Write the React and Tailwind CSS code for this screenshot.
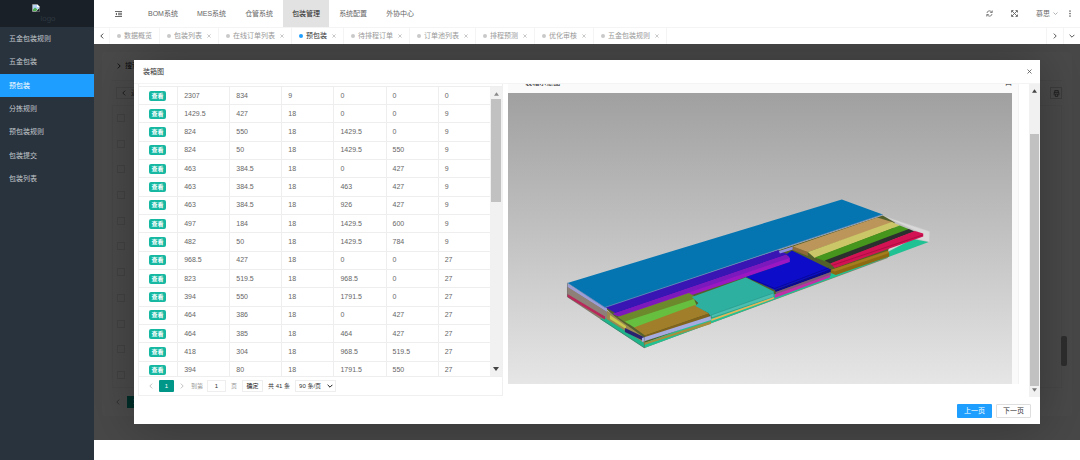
import { useState } from "react"

const menu = ["五金包装规则", "五金包装", "预包装", "分拣规则", "预包装规则", "包装提交", "包装列表"]

const systems = ["BOM系统", "MES系统", "仓管系统", "包装管理", "系统配置", "外协中心"]

const tabs = ["数据概览", "包装列表", "在线订单列表", "预包装", "待排程订单", "订单池列表", "排程预测", "优化审核", "五金包装规则"]

const rows = [
  ["2307", "834", "9", "0", "0", "0"],
  ["1429.5", "427", "18", "0", "0", "9"],
  ["824", "550", "18", "1429.5", "0", "9"],
  ["824", "50", "18", "1429.5", "550", "9"],
  ["463", "384.5", "18", "0", "427", "9"],
  ["463", "384.5", "18", "463", "427", "9"],
  ["463", "384.5", "18", "926", "427", "9"],
  ["497", "184", "18", "1429.5", "600", "9"],
  ["482", "50", "18", "1429.5", "784", "9"],
  ["968.5", "427", "18", "0", "0", "27"],
  ["823", "519.5", "18", "968.5", "0", "27"],
  ["394", "550", "18", "1791.5", "0", "27"],
  ["464", "386", "18", "0", "427", "27"],
  ["464", "385", "18", "464", "427", "27"],
  ["418", "304", "18", "968.5", "519.5", "27"],
  ["394", "80", "18", "1791.5", "550", "27"],
]

function Chevron({ dir, className }) {
  const d = {
    left: "M7 1 3 5l4 4",
    right: "M3 1l4 4-4 4",
    down: "M1 3l4 4 4-4",
  }[dir]
  return (
    <svg viewBox="0 0 10 10" className={className} fill="none" stroke="currentColor" strokeWidth="1.5">
      <path d={d} />
    </svg>
  )
}

function Cross({ className }) {
  return (
    <svg viewBox="0 0 10 10" className={className} fill="none" stroke="currentColor" strokeWidth="1.6">
      <path d="M1 1l8 8M9 1 1 9" />
    </svg>
  )
}

function Arrow({ up, className }) {
  return (
    <svg viewBox="0 0 6 4" className={className} fill="currentColor">
      <path d={up ? "M0 4 3 0l3 4z" : "M0 0h6L3 4z"} />
    </svg>
  )
}

function Sidebar() {
  return (
    <aside className="w-[94px] shrink-0 bg-[#28333e] text-[#c4c8cc]">
      <div className="h-[27px] pr-[6px] bg-[#192027] flex justify-center">
        <svg viewBox="0 0 16 16" className="w-2 h-2 mt-1">
          <path d="M1 1h10l4 4v10H1z" fill="#fff" stroke="#9a9a9a" />
          <path d="M2 2h8v4h4v3L2 13z" fill="#b5d3f5" />
          <path d="M2 14v-3l4-4 5 4-3 3z" fill="#4caf50" />
          <path d="M15 8 8 15h7z" fill="#192027" />
        </svg>
        <span className="mt-[14px] text-[8px] leading-[10px] text-[#2d3741]">logo</span>
      </div>
      <nav className="grid auto-rows-fr h-[164px]">
        {menu.map(name => (
          <a
            key={name}
            href="#"
            className={`flex items-center pl-[9px] ${name === "预包装" ? "bg-[#1e9fff] text-white" : ""}`}
          >
            {name}
          </a>
        ))}
      </nav>
    </aside>
  )
}

function Header() {
  return (
    <header className="h-[27px] bg-white flex items-stretch text-[#666]">
      <button aria-label="收起菜单" className="w-[45px] pl-[3px] flex items-center justify-center">
        <svg viewBox="0 0 14 12" className="w-[7px] h-[6px]" fill="none" stroke="#444" strokeWidth="1.6">
          <path d="M0 1h14M6 4.500h8M6 7.500h8M0 11h14" />
          <path d="M4 3.500v5L1 6z" fill="#444" stroke="none" />
        </svg>
      </button>
      <nav className="flex gap-px">
        {systems.map(name => (
          <a
            key={name}
            href="#"
            className={`px-[9px] flex items-center whitespace-nowrap ${name === "包装管理" ? "bg-[#e2e2e2] text-[#222]" : ""}`}
          >
            {name}
          </a>
        ))}
      </nav>
      <div className="ml-auto pr-[9px] flex items-center">
        <button aria-label="刷新" className="mr-[18px]">
          <svg viewBox="0 0 14 14" className="w-[7px] h-[7px]" fill="none" stroke="#666" strokeWidth="1.600">
            <path d="M2 6a5 5 0 0 1 9.500-1.500M12 8a5 5 0 0 1-9.500 1.500" />
            <path d="M12.500 1v4h-4M1.500 13V9h4" />
          </svg>
        </button>
        <button aria-label="全屏" className="mr-[18px]">
          <svg viewBox="0 0 14 14" className="w-[7px] h-[7px]" fill="none" stroke="#666" strokeWidth="1.8">
            <path d="M2 2l10 10M12 2 2 12" />
            <path d="M1 5V1h4M9 1h4v4M13 9v4H9M5 13H1V9" />
          </svg>
        </button>
        <button className="flex items-center gap-[3px] mr-[11px]">
          慕思
          <Chevron dir="down" className="w-[5px] h-[5px] text-[#999]" />
        </button>
        <button aria-label="更多">
          <svg viewBox="0 0 4 14" className="w-[2px] h-[7px]" fill="#666">
            <circle cx="2" cy="2" r="1.700" />
            <circle cx="2" cy="7" r="1.700" />
            <circle cx="2" cy="12" r="1.700" />
          </svg>
        </button>
      </div>
    </header>
  )
}

function TabBar() {
  return (
    <div className="h-[17px] bg-white border-t border-[#f4f4f4] flex items-stretch text-[#999]">
      <button aria-label="向左" className="w-4 flex items-center justify-center border-r border-[#f6f6f6] text-[#333]">
        <Chevron dir="left" className="w-[6px] h-[6px]" />
      </button>
      {tabs.map((name, i) => (
        <div
          key={name}
          className={`px-[7px] flex items-center border-r border-[#f4f4f4] whitespace-nowrap ${name === "预包装" ? "text-[#333]" : ""}`}
        >
          <span className={`size-1 rounded-full mr-[3px] ${name === "预包装" ? "bg-[#1e9fff]" : "bg-[#c9c9c9]"}`} />
          <a href="#">{name}</a>
          {i > 0 && (
            <button aria-label={`关闭${name}`} className="ml-[5px] text-[#aaa]">
              <Cross className="w-1 h-1" />
            </button>
          )}
        </div>
      ))}
      <button aria-label="向右" className="ml-auto w-[17px] flex items-center justify-center border-l border-[#f4f4f4] text-[#444]">
        <Chevron dir="right" className="w-[6px] h-[6px]" />
      </button>
      <button aria-label="展开" className="w-[17px] flex items-center justify-center border-l border-[#f4f4f4] text-[#444]">
        <Chevron dir="down" className="w-[6px] h-[6px]" />
      </button>
    </div>
  )
}

// page under the dialog's shade
function Backdrop() {
  return (
    <div className="h-full bg-[#f2f2f2] px-2 pt-2 pb-6">
      <div className="h-full bg-[#f8f8f8] rounded-sm px-[10px] flex flex-col text-[#222]">
        <div className="h-[29px] pl-1 flex items-center gap-[3px] border-b border-[#eee]">
          <Chevron dir="right" className="w-[6px] h-[6px]" />
          搜索
        </div>
        <div className="h-6 pl-1 flex items-center justify-between text-[#555]">
          <button className="h-3 px-1 flex items-center gap-1 border border-[#e2e2e2]">
            <Chevron dir="left" className="w-[6px] h-[6px]" />
            返回
          </button>
          <button aria-label="打印" className="w-3 h-3 flex items-center justify-center border border-[#ccc]">
            <svg viewBox="0 0 12 12" className="w-[7px] h-[7px]" fill="none" stroke="#444" strokeWidth="1.2">
              <path d="M3 4V1h6v3M2 9V4h8v5M4 7h4v4H4z" />
            </svg>
          </button>
        </div>
        <div className="flex-1 min-h-0 border border-[#eee] flex flex-col justify-between py-2 pl-1">
          {Array.from({ length: 11 }, (_, i) => (
            <input key={i} type="checkbox" aria-label={`选择第${i + 1}行`} className="appearance-none size-2 border border-[#ddd]" />
          ))}
        </div>
        <div className="h-7 flex items-center gap-[6px] pl-[3px] text-[#999]">
          <Chevron dir="left" className="w-[6px] h-[6px]" />
          <button className="w-[15px] h-3 bg-[#009688] text-white">1</button>
        </div>
      </div>
    </div>
  )
}

function PartsTable() {
  const [page, setPage] = useState("1")

  return (
    <section className="w-[41%] flex flex-col border-x border-b border-[#f0f0f0]">
      <div className="h-[3px] border-b border-[#eee]" />
      <div className="flex-1 min-h-0 flex overflow-hidden">
        <div className="flex-1 h-full overflow-hidden">
          <table className="w-full h-[293px] table-fixed border-collapse">
            <colgroup>
              <col className="w-[11%]" />
            </colgroup>
            <tbody>
              {rows.map((row, i) => (
                <tr key={i} className="border-b border-[#eee]">
                  <td className="p-0 border-r border-[#eee] align-middle">
                    <button className="ml-[10px] w-[17px] h-[10px] rounded-[2px] bg-[#16b8a2] text-white text-[6px] leading-[10px] font-bold block">
                      查看
                    </button>
                  </td>
                  {row.map((value, j) => (
                    <td key={j} className="p-0 pl-[6px] leading-[10px] border-r border-[#eee] last:border-r-0">
                      {value}
                    </td>
                  ))}
                </tr>
              ))}
            </tbody>
          </table>
        </div>
        <div className="w-3 bg-[#f1f1f1] flex flex-col items-center py-[5px]">
          <Arrow up className="w-[5px] h-[4px] text-[#8a8a8a]" />
          <div className="w-[10px] h-[103px] mt-[3px] bg-[#c1c1c1]" />
          <Arrow className="w-[6px] h-[4px] mt-auto text-[#444]" />
        </div>
      </div>
      <div className="h-[19px] shrink-0 border-t border-[#eee] pl-[9px] flex items-center text-[6px] text-[#333]">
        <button aria-label="上一页数据" className="text-[#bbb]">
          <Chevron dir="left" className="w-[6px] h-[6px]" />
        </button>
        <button className="ml-[5px] w-[15px] h-3 rounded-[1px] bg-[#009688] text-white">1</button>
        <button aria-label="下一页数据" className="ml-[5px] text-[#bbb]">
          <Chevron dir="right" className="w-[6px] h-[6px]" />
        </button>
        <label htmlFor="page" className="ml-[6px] text-[#999]">到第</label>
        <input
          id="page"
          value={page}
          onChange={e => setPage(e.target.value)}
          className="ml-1 w-[19px] h-3 border border-[#eee] text-center outline-none"
        />
        <span className="ml-[5px] text-[#999]">页</span>
        <button className="ml-[5px] w-[21px] h-3 border border-[#eee] text-[#111]">确定</button>
        <span className="ml-[5px] whitespace-nowrap">共 41 条</span>
        <span className="ml-[5px] relative">
          <select aria-label="每页条数" defaultValue="90" className="appearance-none block w-[41px] h-3 pl-[3px] border border-[#eee] bg-white leading-[10px]">
            <option value="90">90 条/页</option>
            <option value="50">50 条/页</option>
          </select>
          <Chevron dir="down" className="absolute right-[3px] top-[3px] w-[6px] h-[6px] text-black pointer-events-none" />
        </span>
      </div>
    </section>
  )
}

function Boards() {
  return (
    <svg viewBox="508 93 504 291" className="block w-full h-full">
      {/* bottom sheet and outer edges */}
      <path d="M567.500 284 644.500 336 888 250v8L644.500 348 567.500 297z" fill="#8a7f66" />
      <path d="M882 215.500 930 231.500 929.500 242 914 238 921 233z" fill="#d9d9d9" stroke="#c8c8c8" strokeWidth=".5" />
      <path d="M884 240l38-8-8 7-26 12z" fill="#d6d6d6" />
      <path d="M605 308 883 215.500l12 7-7 30L645 343z" fill="#53602c" />
      <path d="M644.500 343 888 252l25-13 16 3-284.500 106z" fill="#20c293" />
      <path d="M605 318l39.500 25v5L600 319z" fill="#1fb389" />
      <path d="M567.500 284 607 308v4l-39.500-25z" fill="#9c9cd6" />
      <path d="M567.500 287 607 312v6l-39.500-22z" fill="#8d8078" />
      <path d="M567.500 294 605 316.500v3L567.500 297z" fill="#b8285a" />
      <path d="M607 311l38 27v5l-38-24z" fill="#9a8a50" />
      <path d="M610 315l16 11v3l-16-10z" fill="#c8c84e" />
      <path d="M625 328l19 9v4l-19-9z" fill="#2a2470" />

      {/* left stack */}
      <path d="M605 307 778 250l12 5-173 59z" fill="#3915b4" />
      <path d="M613 314 786 255l5 3v4l-168 56z" fill="#9a17c2" />
      <path d="M613 314 786 255l5 2.500-172 59z" fill="#7c19bd" />
      <path d="M617.500 317 689 293l7 4-2 5-66 22z" fill="#6c892c" />
      <path d="M625 321.500 694 299l3 7-62 22z" fill="#67bf3f" />
      <path d="M634 327.500 695 305l14 8.500-64 22z" fill="#a17e2a" />
      <path d="M645 335.500 709 313.500v3L645 338z" fill="#81631c" />
      <path d="M642 338l69-22v4l-69 22z" fill="#a6abdf" />
      <path d="M644 343l67-22v3l-67 21z" fill="#a58e3c" />

      {/* middle stack */}
      <path d="M692 297l54-19.500 28 14v3L711.500 317l-3-4-13-7 3-3z" fill="#2eb0a0" />
      <path d="M711.500 315 774 293v4l-62.500 21z" fill="#4abfb0" stroke="#1e8478" strokeWidth=".4" />
      <path d="M711.500 319 774 297v1.800L711.500 321z" fill="#e6b458" />
      <path d="M779 251 793 246.500v3l-13 4z" fill="#8f8fe0" />
      <path d="M746 277l44-15v-4l-3-4 5-3.500 39 19L775 290z" fill="#0d0dc9" />
      <path d="M775 290l56-21v3l-55 20z" fill="#080890" />
      <path d="M776 292l55-20v3.500L777 296z" fill="#7c577c" />
      <path d="M775 294.500 830 275v2.500L775 298z" fill="#bf2fa5" />
      <path d="M751 279 775 288.500 829 268" fill="none" stroke="#050570" strokeWidth=".5" />

      {/* right stack */}
      <path d="M793 246.500 808 252v4l-15-6z" fill="#8e6a3a" />
      <path d="M793 246.500 877.500 217.500 894 222.500 808 252z" fill="#bc955b" />
      <path d="M808 252 892 222l8 3.500L815 258z" fill="#cbc768" />
      <path d="M815 257.500 900 225.500 910 229.500 825 261z" fill="#46951d" />
      <path d="M825 260.500 909 229l6 2.500-84.500 32z" fill="#2c302f" />
      <path d="M830.500 263.500 915 231l8.500 2.500v3L835 268z" fill="#d31253" />
      <path d="M832 265.500 923 235" fill="none" stroke="#8a0a36" strokeWidth=".5" />
      <path d="M831 270l57-19.500 1.500 3v3L836 275l-5-2z" fill="#8d6a12" />
      <path d="M831 270l57-19 1.500 2L835 271.500z" fill="#a47d1c" />

      {/* big top sheet */}
      <path d="M567.500 283 842 199.500 883 214.500 605 307.500z" fill="#0475b0" />
      <path d="M567.500 283 605 307.500 883 214.500" fill="none" stroke="#6c88b8" strokeWidth=".8" />
      <path d="M567.500 283v14l77 51v-11" fill="none" stroke="#555" strokeWidth=".4" />
    </svg>
  )
}

function Dialog() {
  return (
    <div role="dialog" aria-label="装箱图" className="h-full bg-white flex flex-col shadow-[1px_1px_50px_rgba(0,0,0,0.3)]">
      <div className="h-[23px] shrink-0 px-2 pl-[9px] flex items-center justify-between text-[#333]">
        <h1>装箱图</h1>
        <button aria-label="关闭" className="text-[#555]">
          <Cross className="w-[5px] h-[5px]" />
        </button>
      </div>
      <div className="flex-1 min-h-0 pl-1 flex border-t border-[#f4f4f4]">
        <div className="flex-1 min-w-0 pb-px flex">
          <PartsTable />
          <section className="flex-1 ml-[5px] mr-[10px] mb-3 flex flex-col border-r border-[#f2f2f2] bg-[#fafafa]">
            <div className="h-[9px] shrink-0 pl-[17px] pr-[6px]">
              <div className="h-[2px] overflow-hidden flex items-end justify-between leading-[7px] text-[#222]">
                <span>装箱示意图</span>
                <span>口</span>
              </div>
            </div>
            <div className="flex-1 min-h-0 mr-[6px] bg-linear-to-b from-[#a0a0a0] to-[#e6e6e6]">
              <Boards />
            </div>
          </section>
        </div>
        <div className="w-[11px] bg-[#f1f1f1] flex flex-col items-center py-[5px]">
          <Arrow up className="w-[5px] h-[4px] text-[#444]" />
          <div className="w-[9px] h-[252px] mt-[41px] bg-[#c1c1c1]" />
          <Arrow className="w-[5px] h-[4px] mt-auto text-[#777]" />
        </div>
      </div>
      <div className="h-[27px] shrink-0 pt-px pr-[9px] flex items-center justify-end gap-1">
        <button className="w-[35px] h-[14px] rounded-[1px] bg-[#1e9fff] text-white">上一页</button>
        <button className="w-[35px] h-[14px] rounded-[1px] border border-[#dedede] bg-white text-[#333]">下一页</button>
      </div>
    </div>
  )
}

export default function App() {
  return (
    <div className="min-h-screen flex bg-white text-[7px] leading-[10px] text-[#666] font-['Liberation_Sans','Noto_Sans_CJK_SC',sans-serif]">
      <Sidebar />
      <div className="flex-1 min-w-0 flex flex-col">
        <Header />
        <TabBar />
        <main className="relative flex-1 mb-5 overflow-hidden">
          <div className="absolute inset-0">
            <Backdrop />
          </div>
          <div className="absolute inset-0 bg-black/70 px-10 py-4">
            <Dialog />
            <div className="absolute right-[13px] bottom-[74px] w-[6px] h-[30px] rounded-[2px] bg-[#2b2b2b]" />
          </div>
        </main>
      </div>
    </div>
  )
}
